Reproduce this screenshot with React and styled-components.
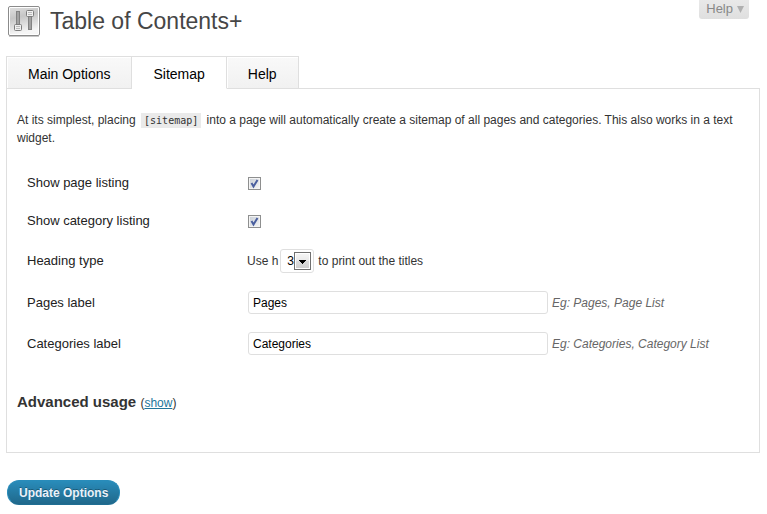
import React, { useState } from "react";
import styled, { createGlobalStyle } from "styled-components";

const GlobalStyle = createGlobalStyle`
  *, *::before, *::after { box-sizing: border-box; }
  body {
    margin: 0;
    background: #fff;
    color: #333;
    font: 12px/18px "Liberation Sans", Arial, sans-serif;
  }
  input, select, button { font-family: inherit; margin: 0; }
`;

const Page = styled.div`
  padding: 0 7px 8px 6px;
`;

const Header = styled.header`
  display: flex;
  align-items: flex-start;
  justify-content: space-between;
  height: 56px;
  padding-right: 11px;
`;

const Brand = styled.div`
  display: flex;
  align-items: center;
  gap: 10px;
  padding: 5px 0 0 2px;
`;

const Title = styled.h1`
  margin: 0;
  color: #464646;
  font-size: 23px;
  font-weight: 400;
  line-height: 32px;
`;

const HelpToggle = styled.button`
  display: flex;
  align-items: center;
  gap: 4px;
  height: 19px;
  padding: 0 5px 1px 7px;
  border: 0;
  border-radius: 0 0 3px 3px;
  background: linear-gradient(#e9e9e9, #dfdfdf);
  color: #888;
  font-size: 13px;
  line-height: 18px;
`;

const Tabs = styled.nav`
  display: flex;
  margin-bottom: -1px;
`;

const Tab = styled.button`
  position: relative;
  height: 33px;
  padding: 3px 21px 0;
  border: 1px solid #dfdfdf;
  border-bottom-color: ${(p) => (p.$active ? "#fff" : "#dfdfdf")};
  background: ${(p) => (p.$active ? "#fff" : "linear-gradient(#f9f9f9, #f1f1f1)")};
  box-shadow: ${(p) => (p.$active ? "none" : "inset 1px 1px 0 #fff")};
  color: #000;
  font-size: 14px;
  line-height: 18px;

  & + & { border-left-width: 0; }
`;

const Panel = styled.section`
  min-height: 365px;
  padding: 22px 9px 40px 10px;
  border: 1px solid #dfdfdf;
`;

const Intro = styled.p`
  margin: 0 0 17px;
`;

const Code = styled.code`
  margin: 0 2px;
  padding: 2px 3px;
  background: #eaeaea;
  font: 10px "DejaVu Sans Mono", monospace;
`;

const Fields = styled.div`
  display: flex;
  flex-direction: column;
`;

const fieldHeights = { check: "38px", select: "42px", text: "41px" };

const Field = styled.div`
  display: grid;
  grid-template-columns: 220px 1fr;
  align-items: center;
  min-height: ${(p) => fieldHeights[p.$kind]};
  padding-left: 10px;
`;

const FieldLabel = styled.label`
  color: #222;
  font-size: 13px;
`;

const Control = styled.div`
  display: flex;
  align-items: center;
`;

const Check = styled.input`
  appearance: none;
  width: 13px;
  height: 13px;
  margin-left: 1px;
  border: 1px solid #8e8f8f;
  background: linear-gradient(135deg, #c8ced6, #f6f6f6);
  box-shadow: inset 0 0 0 1px #f4f4f4;
`;

const CheckWrap = styled.span`
  display: grid;
  align-items: center;

  > * { grid-area: 1 / 1; }
  > svg { margin-left: 1px; pointer-events: none; visibility: hidden; }
  > input:checked + svg { visibility: visible; }
`;

const SelectWrap = styled.span`
  display: grid;
  align-items: center;
  margin: 0 4px 0 2px;

  > * { grid-area: 1 / 1; }
  > svg { justify-self: end; margin-right: 2px; pointer-events: none; }
`;

const Select = styled.select`
  appearance: none;
  width: 34px;
  height: 24px;
  padding: 0 0 0 6px;
  border: 1px solid #dfdfdf;
  border-radius: 3px;
  background: #fff;
  color: #000;
  font-size: 12px;
`;

const TextInput = styled.input`
  flex: 0 1 300px;
  min-width: 0;
  height: 23px;
  margin: 0 4px 0 1px;
  padding: 0 4px;
  border: 1px solid #dfdfdf;
  border-radius: 3px;
  background: #fff;
  color: #000;
  font-size: 12px;
`;

const Hint = styled.em`
  color: #666;
`;

const Advanced = styled.h3`
  margin: 29px 0 0;
  font-size: 15px;
  line-height: 18px;
`;

const Toggle = styled.span`
  font-size: 12px;
  font-weight: 400;
`;

const Link = styled.a`
  color: #21759b;
`;

const Submit = styled.button`
  height: 25px;
  margin: 27px 0 0 1px;
  padding: 0 11px;
  border: 1px solid #298cba;
  border-bottom-color: #1f6e93;
  border-radius: 12px;
  background: linear-gradient(#298cba, #20688b);
  color: #eaf2fa;
  font-size: 12px;
  font-weight: 700;
  line-height: 16px;
  text-shadow: 0 -1px 0 rgba(0, 0, 0, 0.3);
`;

const SettingsIcon = () => (
  <svg width="32" height="32" viewBox="0 0 32 32" aria-hidden="true">
    <defs>
      <linearGradient id="plate" x1="0" y1="0" x2="0.25" y2="1">
        <stop offset="0" stopColor="#dedede" />
        <stop offset="0.4" stopColor="#c6c6c6" />
        <stop offset="1" stopColor="#f6f6f6" />
      </linearGradient>
    </defs>
    <rect x="0.5" y="1.5" width="31" height="29" rx="1.5" fill="#fff" stroke="#8b8b8b" />
    <rect x="2" y="3" width="28" height="26" fill="url(#plate)" />
    <path d="M1 31.5h30" stroke="#c9c9c9" />
    <rect x="8.5" y="6.5" width="3" height="13" fill="#a2a2a2" stroke="#828282" />
    <rect x="20.5" y="11.5" width="3" height="13" fill="#a2a2a2" stroke="#828282" />
    <rect x="6.5" y="19.5" width="7" height="6" rx="1" fill="#f0f0f0" stroke="#7d7d7d" />
    <rect x="18.5" y="5.5" width="7" height="6" rx="1" fill="#f0f0f0" stroke="#7d7d7d" />
    <path d="M8 21.5h4M8 23.5h4M20 7.5h4M20 9.5h4" stroke="#bbb" />
  </svg>
);

const CaretIcon = () => (
  <svg width="7" height="7" viewBox="0 0 7 7" aria-hidden="true">
    <path d="M0 0h7L3.5 7z" fill="#b0b0b0" />
  </svg>
);

const TickIcon = () => (
  <svg width="13" height="13" viewBox="0 0 13 13" aria-hidden="true">
    <path d="M3.5 6l2 3.5L9.5 3" fill="none" stroke="#4a5f9f" strokeWidth="2" />
  </svg>
);

const DropIcon = () => (
  <svg width="18" height="18" viewBox="0 0 18 18" aria-hidden="true">
    <defs>
      <linearGradient id="drop" x1="0" y1="0" x2="0" y2="1">
        <stop offset="0" stopColor="#f4f4f4" />
        <stop offset="0.5" stopColor="#e9e9e9" />
        <stop offset="0.5" stopColor="#dcdcdc" />
        <stop offset="1" stopColor="#cfcfcf" />
      </linearGradient>
    </defs>
    <rect x="0.5" y="0.5" width="16" height="17" fill="#fff" stroke="#707070" />
    <rect x="2" y="2" width="13" height="14" fill="url(#drop)" />
    <path d="M5 8h7v1h-1v1h-1v1H9v1H8v-1H7v-1H6V9H5z" fill="#000" />
  </svg>
);

const CheckField = ({ id, label }) => (
  <Field $kind="check">
    <FieldLabel htmlFor={id}>{label}</FieldLabel>
    <Control>
      <CheckWrap>
        <Check type="checkbox" id={id} defaultChecked />
        <TickIcon />
      </CheckWrap>
    </Control>
  </Field>
);

const TextField = ({ id, label, value, hint }) => (
  <Field $kind="text">
    <FieldLabel htmlFor={id}>{label}</FieldLabel>
    <Control>
      <TextInput type="text" id={id} defaultValue={value} />
      <Hint>{hint}</Hint>
    </Control>
  </Field>
);

export default function App() {
  const [tab, setTab] = useState("Sitemap");
  return (
    <>
      <GlobalStyle />
      <Page>
        <Header>
          <Brand>
            <SettingsIcon />
            <Title>Table of Contents+</Title>
          </Brand>
          <HelpToggle type="button">
            Help
            <CaretIcon />
          </HelpToggle>
        </Header>
        <Tabs>
          {["Main Options", "Sitemap", "Help"].map((name) => (
            <Tab key={name} type="button" $active={name === tab} onClick={() => setTab(name)}>
              {name}
            </Tab>
          ))}
        </Tabs>
        <Panel>
          <Intro>
            At its simplest, placing <Code>[sitemap]</Code> into a page will automatically create a
            sitemap of all pages and categories. This also works in a text widget.
          </Intro>
          <Fields>
            <CheckField id="show-pages" label="Show page listing" />
            <CheckField id="show-categories" label="Show category listing" />
            <Field $kind="select">
              <FieldLabel htmlFor="heading-type">Heading type</FieldLabel>
              <Control>
                Use h
                <SelectWrap>
                  <Select id="heading-type" defaultValue="3">
                    {["1", "2", "3", "4", "5", "6"].map((n) => (
                      <option key={n}>{n}</option>
                    ))}
                  </Select>
                  <DropIcon />
                </SelectWrap>
                to print out the titles
              </Control>
            </Field>
            <TextField id="pages-label" label="Pages label" value="Pages" hint="Eg: Pages, Page List" />
            <TextField
              id="categories-label"
              label="Categories label"
              value="Categories"
              hint="Eg: Categories, Category List"
            />
          </Fields>
          <Advanced>
            Advanced usage{" "}
            <Toggle>
              (<Link href="#advanced">show</Link>)
            </Toggle>
          </Advanced>
        </Panel>
        <Submit type="submit">Update Options</Submit>
      </Page>
    </>
  );
}
